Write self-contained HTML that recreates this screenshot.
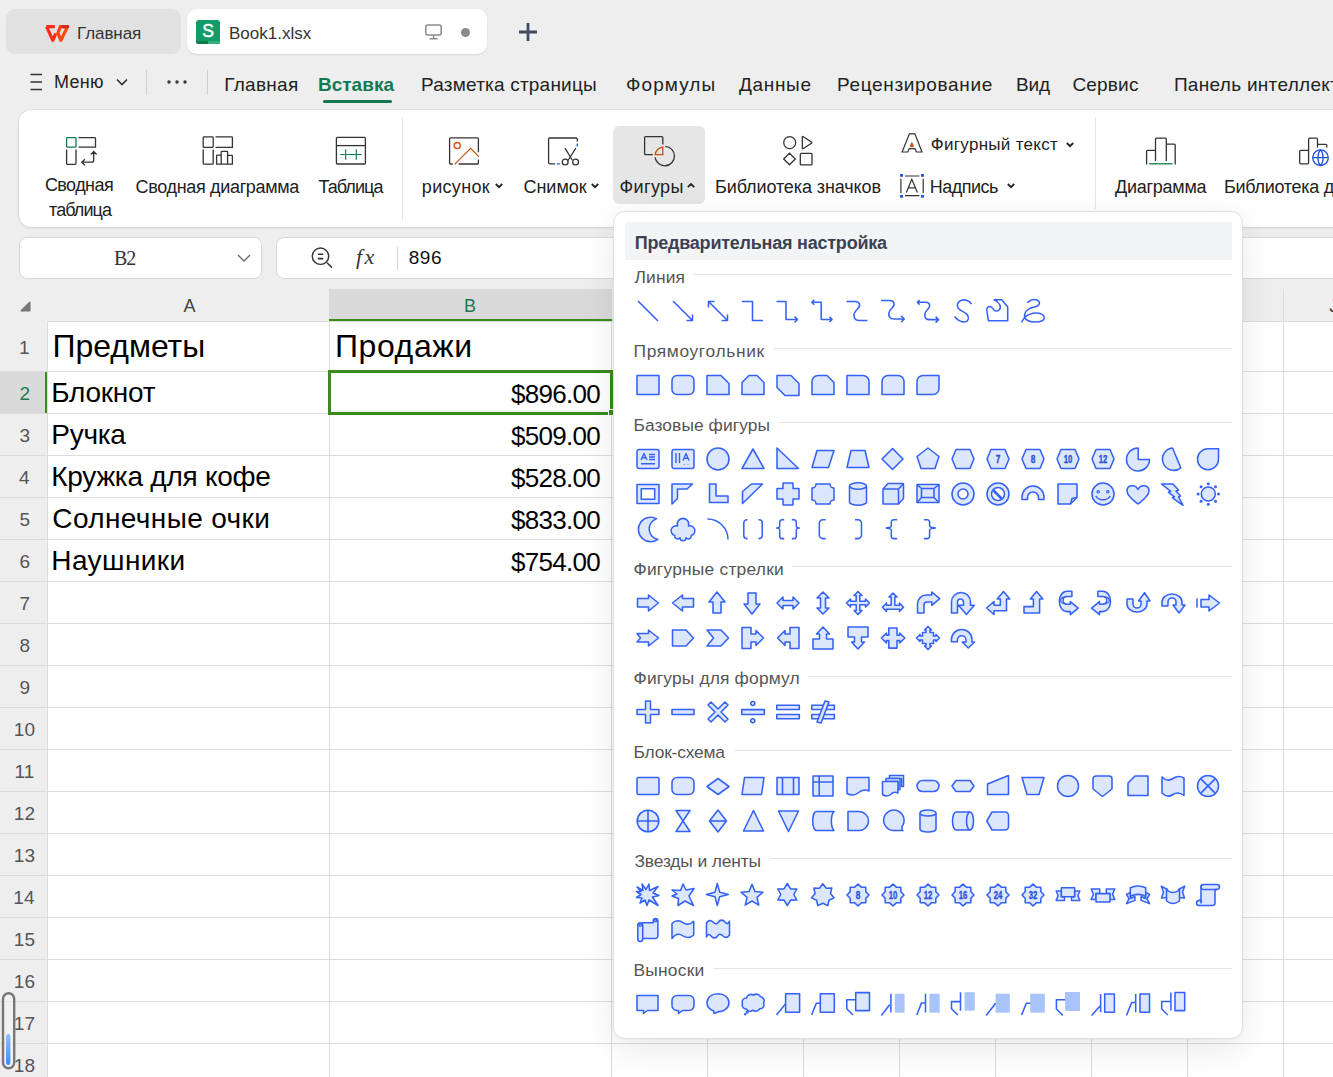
<!DOCTYPE html><html><head><meta charset="utf-8"><style>
html,body{margin:0;padding:0}
body{width:1333px;height:1077px;overflow:hidden;position:relative;background:#eeeeee;font-family:'Liberation Sans', sans-serif}
.t{position:absolute;white-space:nowrap;line-height:normal}
.b{position:absolute;box-sizing:border-box}
.s{position:absolute;overflow:visible}
.k *{fill:none;stroke:#333333;stroke-width:1.3}
.i{position:absolute;overflow:visible}
.i *{fill:#dce6fd;stroke:#3462f8;stroke-width:1.55;stroke-linejoin:round;fill-rule:evenodd}
.i .n{fill:none}
.i .n2{fill:none;stroke-width:1.4}
.i .n3{fill:none;stroke-width:2.6}
.i .n4{fill:none;stroke-width:1.2}
.i .x{fill:#3462f8;stroke:none}
.i .a{fill:#a9c3fb;stroke:none}
.i .tx{fill:#2a52d6;stroke:#2a52d6;stroke-width:0.35;font-family:'Liberation Sans',sans-serif;font-weight:700;}
</style></head><body>
<div class="b" style="left:6px;top:9px;width:175px;height:45px;background:#e1e1e1;border-radius:9px"></div>
<svg class="s" style="left:40px;top:18px" width="36" height="30" viewBox="0 0 36 30"><path d="M6.3 8.6H14.8M6.6 8.6L12.8 22.3L15.8 15.5" fill="none" stroke="#ff2a17" stroke-width="3.2" stroke-linejoin="round"/><path d="M17.4 16.5L20.3 8.6H27.6L20.9 22.3L18.2 15.8" fill="none" stroke="#ff4514" stroke-width="3.2" stroke-linejoin="round"/><path d="M22.5 8.6H27.6" stroke="#c9301a" stroke-width="3.2" stroke-linecap="round"/></svg>
<div class="t" style="left:77.00px;top:24.04px;font-size:17px;color:#333;letter-spacing:-0.083px;">Главная</div>
<div class="b" style="left:187px;top:9px;width:300px;height:45px;background:#fff;border-radius:10px;box-shadow:0 1px 2px rgba(0,0,0,.10)"></div>
<svg class="s" style="left:196px;top:20px" width="24" height="24" viewBox="0 0 24 24"><rect x="0" y="0" width="24" height="24" rx="3" fill="#139c68"/><path d="M0 21H24V21.5A2.5 2.5 0 0 1 21.5 24H2.5A2.5 2.5 0 0 1 0 21.5Z" fill="#0d7c4a"/><path d="M12 21H24V21.5A2.5 2.5 0 0 1 21.5 24H12Z" fill="#33b07c"/><text x="12" y="17" text-anchor="middle" font-family="Liberation Sans" font-weight="400" font-size="17.5" fill="#fff" stroke="#fff" stroke-width="0.5">S</text></svg>
<div class="t" style="left:229.00px;top:24.04px;font-size:17px;color:#333;letter-spacing:0.011px;">Book1.xlsx</div>
<svg class="s" style="left:425px;top:24px" width="17" height="16" viewBox="0 0 17 16"><rect x="0.8" y="1" width="15.4" height="10" rx="2" fill="none" stroke="#8a8a8a" stroke-width="1.5"/><path d="M8.5 11v3M4.5 14.8h8" stroke="#8a8a8a" stroke-width="1.5"/></svg>
<svg class="s" style="left:461px;top:28px" width="9" height="9" viewBox="0 0 9 9"><circle cx="4.5" cy="4.5" r="4.5" fill="#8c8c8c"/></svg>
<svg class="s" style="left:518px;top:22px" width="20" height="20" viewBox="0 0 20 20"><path d="M10 1v18M1 10h18" stroke="#3f4a66" stroke-width="2.8"/></svg>
<svg class="s" style="left:30px;top:73px" width="13" height="18" viewBox="0 0 13 18"><path d="M0.5 1.5h11.5M0.5 9h11.5M0.5 16.5h11.5" stroke="#333" stroke-width="1.6"/></svg>
<div class="t" style="left:54.00px;top:71.92px;font-size:18px;color:#222;letter-spacing:0.284px;">Меню</div>
<svg class="s" style="left:116px;top:78px" width="12" height="8" viewBox="0 0 12 8"><path d="M1 1.5l5 5 5-5" fill="none" stroke="#333" stroke-width="1.6"/></svg>
<div class="b" style="left:146px;top:70px;width:1px;height:25px;background:#d0d0d0"></div>
<svg class="s" style="left:166px;top:79px" width="22" height="6" viewBox="0 0 22 6"><circle cx="3" cy="3" r="1.7" fill="#333"/><circle cx="11" cy="3" r="1.7" fill="#333"/><circle cx="19" cy="3" r="1.7" fill="#333"/></svg>
<div class="b" style="left:207px;top:70px;width:1px;height:25px;background:#d0d0d0"></div>
<div class="t" style="left:224.20px;top:74.00px;font-size:19px;color:#222;letter-spacing:0.295px;">Главная</div>
<div class="t" style="left:318.00px;top:74.00px;font-size:19px;color:#137a50;font-weight:700;letter-spacing:0.008px;">Вставка</div>
<div class="t" style="left:421.00px;top:74.00px;font-size:19px;color:#222;letter-spacing:0.206px;">Разметка страницы</div>
<div class="t" style="left:626.10px;top:74.00px;font-size:19px;color:#222;letter-spacing:1.046px;">Формулы</div>
<div class="t" style="left:739.00px;top:74.00px;font-size:19px;color:#222;letter-spacing:0.665px;">Данные</div>
<div class="t" style="left:837.00px;top:74.00px;font-size:19px;color:#222;letter-spacing:0.658px;">Рецензирование</div>
<div class="t" style="left:1016.00px;top:74.00px;font-size:19px;color:#222;letter-spacing:-0.143px;">Вид</div>
<div class="t" style="left:1072.40px;top:74.00px;font-size:19px;color:#222;letter-spacing:0.188px;">Сервис</div>
<div class="t" style="left:1173.90px;top:74.00px;font-size:19px;color:#222;letter-spacing:0.300px;">Панель интеллектуальных</div>
<div class="b" style="left:323px;top:100px;width:69px;height:3px;background:#137a50;border-radius:2px"></div>
<div class="b" style="left:19px;top:110px;width:1400px;height:117px;background:#fff;border-radius:12px;box-shadow:0 0 0 0.6px rgba(0,0,0,.09), 0 1px 3px rgba(0,0,0,.08)"></div>
<div class="b" style="left:613px;top:126px;width:92px;height:78px;background:#e6e6e6;border-radius:6px"></div>
<svg class="s k" style="left:60px;top:130px" width="40" height="40" viewBox="0 0 40 40"><rect x="6.6" y="7.7" width="9.4" height="9.5" rx="0.8" style="stroke:#107c4d"/><path d="M18.5 7.7H34.7A0.8 0.8 0 0 1 35.5 8.5V17.2H18.5M6.6 19.5V33.5A0.8 0.8 0 0 0 7.4 34.3H15.2A0.8 0.8 0 0 0 16 33.5V19.5M33.7 21.7V30.2A2 2 0 0 1 31.7 32.2H22M30.8 24.5L33.7 21.5L36.6 24.5M24.8 29.3L21.8 32.2L24.8 35.2"/></svg><svg class="s k" style="left:198px;top:130px" width="40" height="40" viewBox="0 0 40 40"><rect x="5.2" y="6.9" width="10" height="10.5" rx="0.8"/><path d="M17.5 6.9H33.6A0.8 0.8 0 0 1 34.4 7.7V17.4H17.5M5.2 19.5V33.4A0.8 0.8 0 0 0 6 34.2H14.4A0.8 0.8 0 0 0 15.2 33.4V19.5M18.6 34.2V26A0.8 0.8 0 0 1 19.4 25.2H23.2V22.2A0.8 0.8 0 0 1 24 21.4H28.8A0.8 0.8 0 0 1 29.6 22.2V25.3H33.6A0.8 0.8 0 0 1 34.4 26.1V34.2ZM23.2 25.2V34.2M29.6 25.3V34.2"/></svg><svg class="s k" style="left:331px;top:130px" width="40" height="40" viewBox="0 0 40 40"><rect x="5.4" y="7.4" width="29" height="26.6" rx="1"/><path d="M5.4 15.6H34.4"/><path d="M9.3 24.5H30.5M14.7 19.3V29.7M25.3 19.3V29.7" style="stroke:#107c4d;stroke-width:1.2"/></svg><svg class="s k" style="left:444px;top:130px" width="40" height="40" viewBox="0 0 40 40"><path d="M8.7 34H6.6A1 1 0 0 1 5.6 33V8.8A1 1 0 0 1 6.6 7.8H33.4A1 1 0 0 1 34.4 8.8V22.3M34.4 29.4V33A1 1 0 0 1 33.4 34H14.7"/><circle cx="13.2" cy="15.6" r="3.1" style="stroke:#c9500c"/><path d="M10.6 34.4L26.6 18.4L34.8 26.6" style="stroke:#c9500c;stroke-width:1.2"/></svg><svg class="s k" style="left:544px;top:130px" width="40" height="40" viewBox="0 0 40 40"><path d="M11.2 33.8H5.6A1 1 0 0 1 4.6 32.8V9A1 1 0 0 1 5.6 8H32.3A1 1 0 0 1 33.3 9V11.5"/><path d="M33.3 13.4V16.4M13 33.8H15.8" style="stroke:#1a4fe0;stroke-width:1.3"/><circle cx="21.2" cy="32" r="2.9"/><circle cx="31.6" cy="32" r="2.9"/><path d="M21 18.2L28.2 30M31.8 18.2L24 30.5"/></svg><svg class="s k" style="left:639px;top:130px" width="40" height="40" viewBox="0 0 40 40"><path d="M13.8 24.7H6.6A1 1 0 0 1 5.6 23.7V7.7A1 1 0 0 1 6.6 6.7H22.8A1 1 0 0 1 23.8 7.7V14.5"/><path d="M26.3 16.4A9.7 9.7 0 1 1 16.1 27.3"/><path d="M16.2 24.7A8.5 8.5 0 0 1 23.8 17.1V24.7Z" style="stroke:#c9500c;stroke-width:1.3"/></svg><svg class="s k" style="left:778px;top:130px" width="40" height="40" viewBox="0 0 40 40"><circle cx="11.7" cy="12.6" r="6"/><path d="M24.3 6.8V18.3A0.5 0.5 0 0 0 25 18.7L33.7 13A0.5 0.5 0 0 0 33.7 12.3L25 6.5A0.5 0.5 0 0 0 24.3 6.8ZM11.5 23.2L17.3 29L11.5 34.8L5.7 29Z"/><rect x="22.3" y="23.4" width="11.7" height="11.5" rx="1"/></svg><svg class="s k" style="left:895px;top:128px" width="34" height="74" viewBox="0 0 34 74"><path d="M14.4 5.9H19.9L27 24H21.4L20 20.6H14.2L12.8 24H7.1Z" style="stroke-width:1.2"/><path d="M16.8 14.6L18.5 18.6H15.1Z" style="fill:#c9500c;stroke:#c9500c;stroke-width:1"/><path d="M10 48H24.4M10 67.7H24.4M5.9 50.8V65M28.2 50.8V65M11.3 64.6L16.8 51.2L22.4 64.6M13.3 59.8H20.3" style="stroke-width:1.2"/><rect x="5.1" y="46" width="2.8" height="2.8" style="fill:#1a4fe0;stroke:none"/><rect x="26.1" y="46" width="2.8" height="2.8" style="fill:#1a4fe0;stroke:none"/><rect x="5.1" y="66.9" width="2.8" height="2.8" style="fill:#1a4fe0;stroke:none"/><rect x="26.1" y="66.9" width="2.8" height="2.8" style="fill:#1a4fe0;stroke:none"/></svg><svg class="s k" style="left:1141px;top:130px" width="40" height="40" viewBox="0 0 40 40"><path d="M5.6 34.6V21.3A1 1 0 0 1 6.6 20.3H14.5V30.9M14.5 20.3V9.2A1 1 0 0 1 15.5 8.2H24.3A1 1 0 0 1 25.3 9.2V30.9M25.3 14.1H33.2A1 1 0 0 1 34.2 15.1V34.6"/><path d="M8.2 33.8H31.6" style="stroke:#107c4d;stroke-width:1.3"/></svg><svg class="s k" style="left:1293px;top:130px" width="40" height="40" viewBox="0 0 40 40"><path d="M15.6 20.3H7.7A1 1 0 0 0 6.7 21.3V32.8A1 1 0 0 0 7.7 33.8H14.6A1 1 0 0 0 15.6 32.8V9.2A1 1 0 0 1 16.6 8.2H23.5A1 1 0 0 1 24.5 9.2V17.5M24.5 14.3H32.8A1 1 0 0 1 33.8 15.3V17.5"/><circle cx="27.5" cy="27.7" r="7.8" style="stroke:#1a4fe0;stroke-width:1.3"/><path d="M19.7 27.7H35.3M27.5 19.9C24 23.5 24 31.9 27.5 35.5M27.5 19.9C31 23.5 31 31.9 27.5 35.5" style="stroke:#1a4fe0;stroke-width:1.2"/></svg>
<div class="t" style="left:44.90px;top:175.12px;font-size:18px;color:#222;letter-spacing:-0.571px;">Сводная</div>
<div class="t" style="left:49.00px;top:200.22px;font-size:18px;color:#222;letter-spacing:-0.903px;">таблица</div>
<div class="t" style="left:135.60px;top:176.52px;font-size:18px;color:#222;letter-spacing:-0.336px;">Сводная диаграмма</div>
<div class="t" style="left:318.40px;top:176.52px;font-size:18px;color:#222;letter-spacing:-0.928px;">Таблица</div>
<div class="b" style="left:402px;top:117px;width:1px;height:103px;background:#e4e4e4"></div>
<div class="t" style="left:421.80px;top:176.52px;font-size:18px;color:#222;letter-spacing:0.331px;">рисунок</div>
<div class="t" style="left:523.50px;top:176.52px;font-size:18px;color:#222;letter-spacing:-0.036px;">Снимок</div>
<div class="t" style="left:619.50px;top:176.52px;font-size:18px;color:#222;letter-spacing:0.377px;">Фигуры</div>
<div class="t" style="left:715.00px;top:176.52px;font-size:18px;color:#222;letter-spacing:-0.103px;">Библиотека значков</div>
<div class="t" style="left:930.80px;top:135.34px;font-size:17px;color:#222;letter-spacing:0.293px;">Фигурный текст</div>
<div class="t" style="left:929.80px;top:176.52px;font-size:18px;color:#222;letter-spacing:-0.519px;">Надпись</div>
<div class="b" style="left:1095px;top:117px;width:1px;height:92px;background:#e4e4e4"></div>
<div class="t" style="left:1115.00px;top:176.52px;font-size:18px;color:#222;letter-spacing:-0.262px;">Диаграмма</div>
<div class="t" style="left:1224.00px;top:176.52px;font-size:18px;color:#222;letter-spacing:-0.280px;">Библиотека диаграмм</div>
<svg class="s" style="left:494.5px;top:182.9px" width="8" height="5.2" viewBox="0 0 8 5.2"><path d="M0.8 1L4 4.2L7.2 1" fill="none" stroke="#222" stroke-width="1.8"/></svg>
<svg class="s" style="left:591px;top:182.9px" width="8" height="5.2" viewBox="0 0 8 5.2"><path d="M0.8 1L4 4.2L7.2 1" fill="none" stroke="#222" stroke-width="1.8"/></svg>
<svg class="s" style="left:687px;top:182.9px" width="8" height="5.2" viewBox="0 0 8 5.2"><path d="M0.8 4.2L4 1L7.2 4.2" fill="none" stroke="#222" stroke-width="1.8"/></svg>
<svg class="s" style="left:1065.5px;top:141.9px" width="8" height="5.2" viewBox="0 0 8 5.2"><path d="M0.8 1L4 4.2L7.2 1" fill="none" stroke="#222" stroke-width="1.8"/></svg>
<svg class="s" style="left:1006.5px;top:183.4px" width="8" height="5.2" viewBox="0 0 8 5.2"><path d="M0.8 1L4 4.2L7.2 1" fill="none" stroke="#222" stroke-width="1.8"/></svg>
<div class="b" style="left:19px;top:237px;width:243px;height:42px;background:#fff;border:1px solid #d9d9d9;border-radius:8px"></div>
<div class="t" style="left:113.88px;top:247.10px;font-size:20px;color:#333;letter-spacing:-0.900px;font-family:'Liberation Serif', serif;">B2</div>
<svg class="s" style="left:237px;top:254px" width="14" height="8" viewBox="0 0 14 8"><path d="M1 1l6 6 6-6" fill="none" stroke="#666" stroke-width="1.3"/></svg>
<div class="b" style="left:276px;top:237px;width:1200px;height:42px;background:#fff;border:1px solid #d9d9d9;border-radius:8px"></div>
<svg class="s" style="left:300px;top:240px" width="90" height="35" viewBox="0 0 90 35"><circle cx="20.5" cy="16.2" r="8.2" fill="none" stroke="#333" stroke-width="1.4"/><path d="M17.8 14.3H23.2M17.8 18.6H23.2" stroke="#333" stroke-width="1.6"/><path d="M27 22.8L32 27.6" stroke="#333" stroke-width="1.5"/></svg>
<div class="t" style="left:356px;top:243.5px;font-size:22px;font-family:'Liberation Serif',serif;font-style:italic;color:#333;letter-spacing:2.5px">fx</div>
<div class="b" style="left:397px;top:247px;width:1px;height:23px;background:#d4d4d4"></div>
<div class="t" style="left:408.70px;top:247.10px;font-size:19px;color:#111;letter-spacing:0.583px;">896</div>
<div class="b" style="left:47px;top:321px;width:1400px;height:800px;background:#fff"></div><div class="b" style="left:329px;top:289px;width:283px;height:32px;background:#dadada"></div><div class="b" style="left:329px;top:319px;width:283px;height:2px;background:#3a8a1e"></div><div class="b" style="left:0px;top:371px;width:47px;height:42px;background:#dadada"></div><div class="b" style="left:45px;top:371px;width:2px;height:42px;background:#3a8a1e"></div><svg class="s" style="left:20px;top:301px" width="11" height="11" viewBox="0 0 11 11"><path d="M1.2 9.8 L9.8 1.2 L9.8 9.8 Z" fill="#777" stroke="#777" stroke-width="1.5" stroke-linejoin="round"/></svg><svg class="s" style="left:0px;top:0px" width="1333" height="1077" viewBox="0 0 1333 1077"><rect x="47" y="321" width="1333" height="1" fill="#dcdcdc"/><rect x="0" y="371" width="1333" height="1" fill="#dcdcdc"/><rect x="0" y="413" width="1333" height="1" fill="#dcdcdc"/><rect x="0" y="455" width="1333" height="1" fill="#dcdcdc"/><rect x="0" y="497" width="1333" height="1" fill="#dcdcdc"/><rect x="0" y="539" width="1333" height="1" fill="#dcdcdc"/><rect x="0" y="581" width="1333" height="1" fill="#dcdcdc"/><rect x="0" y="623" width="1333" height="1" fill="#dcdcdc"/><rect x="0" y="665" width="1333" height="1" fill="#dcdcdc"/><rect x="0" y="707" width="1333" height="1" fill="#dcdcdc"/><rect x="0" y="749" width="1333" height="1" fill="#dcdcdc"/><rect x="0" y="791" width="1333" height="1" fill="#dcdcdc"/><rect x="0" y="833" width="1333" height="1" fill="#dcdcdc"/><rect x="0" y="875" width="1333" height="1" fill="#dcdcdc"/><rect x="0" y="917" width="1333" height="1" fill="#dcdcdc"/><rect x="0" y="959" width="1333" height="1" fill="#dcdcdc"/><rect x="0" y="1001" width="1333" height="1" fill="#dcdcdc"/><rect x="0" y="1043" width="1333" height="1" fill="#dcdcdc"/><rect x="0" y="1085" width="1333" height="1" fill="#dcdcdc"/><rect x="47" y="321" width="1" height="760" fill="#dcdcdc"/><rect x="329" y="321" width="1" height="760" fill="#dcdcdc"/><rect x="611" y="321" width="1" height="760" fill="#dcdcdc"/><rect x="707" y="289" width="1" height="800" fill="#dcdcdc"/><rect x="803" y="289" width="1" height="800" fill="#dcdcdc"/><rect x="899" y="289" width="1" height="800" fill="#dcdcdc"/><rect x="995" y="289" width="1" height="800" fill="#dcdcdc"/><rect x="1091" y="289" width="1" height="800" fill="#dcdcdc"/><rect x="1187" y="289" width="1" height="800" fill="#dcdcdc"/><rect x="1283" y="289" width="1" height="800" fill="#dcdcdc"/></svg><div class="t" style="left:183.50px;top:295.92px;font-size:18px;color:#444;">A</div><div class="t" style="left:464.00px;top:295.92px;font-size:18px;color:#1a7a55;">B</div><div class="t" style="left:652.50px;top:295.92px;font-size:18px;color:#444;">C</div><div class="t" style="left:748.00px;top:295.92px;font-size:18px;color:#444;">D</div><div class="t" style="left:844.50px;top:295.92px;font-size:18px;color:#444;">E</div><div class="t" style="left:941.00px;top:295.92px;font-size:18px;color:#444;">F</div><div class="t" style="left:1036.50px;top:295.92px;font-size:18px;color:#444;">G</div><div class="t" style="left:1132.50px;top:295.92px;font-size:18px;color:#444;">H</div><div class="t" style="left:1232.50px;top:295.92px;font-size:18px;color:#444;">I</div><div class="t" style="left:1329.30px;top:295.92px;font-size:18px;color:#444;">J</div><div class="t" style="left:19.10px;top:337.40px;font-size:19px;color:#555;">1</div><div class="t" style="left:19.60px;top:383.40px;font-size:19px;color:#1a7a55;">2</div><div class="t" style="left:19.60px;top:425.40px;font-size:19px;color:#555;">3</div><div class="t" style="left:19.10px;top:467.40px;font-size:19px;color:#555;">4</div><div class="t" style="left:19.60px;top:509.40px;font-size:19px;color:#555;">5</div><div class="t" style="left:19.60px;top:551.40px;font-size:19px;color:#555;">6</div><div class="t" style="left:19.60px;top:593.40px;font-size:19px;color:#555;">7</div><div class="t" style="left:19.60px;top:635.40px;font-size:19px;color:#555;">8</div><div class="t" style="left:19.60px;top:677.40px;font-size:19px;color:#555;">9</div><div class="t" style="left:13.82px;top:719.40px;font-size:19px;color:#555;">10</div><div class="t" style="left:14.52px;top:761.40px;font-size:19px;color:#555;">11</div><div class="t" style="left:13.82px;top:803.40px;font-size:19px;color:#555;">12</div><div class="t" style="left:13.82px;top:845.40px;font-size:19px;color:#555;">13</div><div class="t" style="left:13.32px;top:887.40px;font-size:19px;color:#555;">14</div><div class="t" style="left:13.82px;top:929.40px;font-size:19px;color:#555;">15</div><div class="t" style="left:13.82px;top:971.40px;font-size:19px;color:#555;">16</div><div class="t" style="left:13.82px;top:1013.40px;font-size:19px;color:#555;">17</div><div class="t" style="left:13.82px;top:1055.40px;font-size:19px;color:#555;">18</div><div class="t" style="left:52.60px;top:328.33px;font-size:32px;color:#000;letter-spacing:-0.050px;">Предметы</div><div class="t" style="left:334.90px;top:328.33px;font-size:32px;color:#000;letter-spacing:0.606px;">Продажи</div><div class="t" style="left:51.30px;top:377.21px;font-size:28px;color:#000;letter-spacing:-0.243px;">Блокнот</div><div class="t" style="left:510.90px;top:379.05px;font-size:26px;color:#000;letter-spacing:-0.704px;">$896.00</div><div class="t" style="left:51.30px;top:419.21px;font-size:28px;color:#000;letter-spacing:-0.282px;">Ручка</div><div class="t" style="left:510.90px;top:421.05px;font-size:26px;color:#000;letter-spacing:-0.704px;">$509.00</div><div class="t" style="left:51.30px;top:461.21px;font-size:28px;color:#000;letter-spacing:-0.259px;">Кружка для кофе</div><div class="t" style="left:510.90px;top:463.05px;font-size:26px;color:#000;letter-spacing:-0.704px;">$528.00</div><div class="t" style="left:52.30px;top:503.21px;font-size:28px;color:#000;letter-spacing:0.381px;">Солнечные очки</div><div class="t" style="left:510.90px;top:505.05px;font-size:26px;color:#000;letter-spacing:-0.704px;">$833.00</div><div class="t" style="left:51.30px;top:545.21px;font-size:28px;color:#000;letter-spacing:0.415px;">Наушники</div><div class="t" style="left:510.90px;top:547.05px;font-size:26px;color:#000;letter-spacing:-0.704px;">$754.00</div><svg class="s" style="left:0px;top:990px" width="17" height="82" viewBox="0 0 17 82"><rect x="3" y="3.3" width="11.2" height="75" rx="5.6" fill="#f4f4f4" fill-opacity=".6" stroke="#777" stroke-width="2.4"/><defs><linearGradient id="bg1" x1="0" y1="0" x2="0" y2="1"><stop offset="0" stop-color="#8fc0ff"/><stop offset="1" stop-color="#3d8bff"/></linearGradient></defs><rect x="6" y="44" width="4.4" height="31" rx="2.2" fill="url(#bg1)"/></svg><div class="b" style="left:328px;top:370px;width:285px;height:45px;border:3px solid #3a8a1e"></div><div class="b" style="left:608px;top:409px;width:6px;height:7px;background:#3a8a1e;border:1px solid #fff"></div>
<div class="b" style="left:613px;top:211px;width:630px;height:828px;background:#fff;border:1px solid #e0e0e0;border-radius:12px;box-shadow:0 10px 36px rgba(0,0,0,.09), 0 1px 3px rgba(0,0,0,.04)"></div><div class="b" style="left:625px;top:222px;width:607px;height:38px;background:#f3f4f6"></div><div class="t" style="left:634.80px;top:233.12px;font-size:18px;color:#3a4254;font-weight:700;letter-spacing:-0.231px;">Предварительная настройка</div><div class="t" style="left:634.50px;top:266.57px;font-size:17.4px;color:#555;letter-spacing:0.139px;">Линия</div><div class="b" style="left:693px;top:274px;width:539px;height:1px;background:#e4e4e4"></div><svg class="i" style="left:636px;top:299px" width="24" height="24" viewBox="0 0 24 24"><path d="M2 2L22 22" class="n"/></svg><svg class="i" style="left:671px;top:299px" width="24" height="24" viewBox="0 0 24 24"><path d="M2 2L21.5 21.5M21.5 15.5V21.5H15.5" class="n"/></svg><svg class="i" style="left:706px;top:299px" width="24" height="24" viewBox="0 0 24 24"><path d="M2.5 2.5L21.5 21.5M2.5 8.5V2.5H8.5M21.5 15.5V21.5H15.5" class="n"/></svg><svg class="i" style="left:741px;top:299px" width="24" height="24" viewBox="0 0 24 24"><path d="M1 2.5H11.5V21.5H22" class="n"/></svg><svg class="i" style="left:776px;top:299px" width="24" height="24" viewBox="0 0 24 24"><path d="M0.5 2.5H10V20.5H21.5M18.5 17.5L21.5 20.5L18.5 23.5" class="n"/></svg><svg class="i" style="left:811px;top:299px" width="24" height="24" viewBox="0 0 24 24"><path d="M1 3.3H10.2V20.4H21M3.3 0.8L0.8 3.3L3.3 5.8M18.5 17.9L21 20.4L18.5 22.9" class="n"/></svg><svg class="i" style="left:846px;top:299px" width="24" height="24" viewBox="0 0 24 24"><path d="M0.5 2.5H9C14 2.5 15 6.5 11.5 10C8 13.5 7 16 8.5 19C9.5 21 11 21.5 13 21.5H21.5" class="n"/></svg><svg class="i" style="left:881px;top:299px" width="24" height="24" viewBox="0 0 24 24"><path d="M0 1.5H8.5C13.5 1.5 14.5 5.5 11 9C7.5 12.5 7 16 9 18.5C10 19.8 11 20 13 20H23M20 16.7L23.3 20L20 23.3" class="n"/></svg><svg class="i" style="left:916px;top:299px" width="24" height="24" viewBox="0 0 24 24"><path d="M1.3 3.3H9.5C14 3.3 15 7 12 10C9 13 8 16 9.5 19C10.3 20.4 11.5 20.6 13 20.6H22.5M3.6 1L1.3 3.3L3.6 5.6M19.6 17.6L22.5 20.6L19.6 23.6" class="n"/></svg><svg class="i" style="left:951px;top:299px" width="24" height="24" viewBox="0 0 24 24"><path d="M20.5 5C18.5 1.5 14 0.3 10.5 1.2C6.5 2.5 5 6 7.5 9.5C9.5 12 14.5 13 16.5 16C18.5 19.5 17 23 13.5 23C9.5 23 6 20.5 3.5 17.5" class="n"/></svg><svg class="i" style="left:986px;top:299px" width="24" height="24" viewBox="0 0 24 24"><path d="M8.1 0.8H15.7L21.7 8.1V21.7H2.4L0.8 11.5C0.8 8.5 2.5 7.5 4 7.5C6 7.5 7 10 8 11C9.5 12.5 12 12.5 13.5 10.5C15.5 8 14 3.5 8.1 0.8Z" class="n"/></svg><svg class="i" style="left:1021px;top:299px" width="24" height="24" viewBox="0 0 24 24"><path d="M0.5 23.3L3.6 18.4C3.3 15 4.5 12 7.5 10.2C10.5 8.5 14.5 8 16.5 7C19 5.5 19.2 2.5 16.5 1.2C13.5 -0.2 9 0.5 6.3 3.7M3.6 18.4C7 15.5 11 14 15 14C20 14 23.3 16 23.3 18.5C23.3 21.5 19 23 14 23C9 23 5 21.5 3.6 18.4" class="n"/></svg><div class="t" style="left:633.50px;top:340.97px;font-size:17.4px;color:#555;letter-spacing:0.642px;">Прямоугольник</div><div class="b" style="left:773px;top:348px;width:459px;height:1px;background:#e4e4e4"></div><svg class="i" style="left:636px;top:373px" width="24" height="24" viewBox="0 0 24 24"><rect x="1" y="2.5" width="22" height="19"/></svg><svg class="i" style="left:671px;top:373px" width="24" height="24" viewBox="0 0 24 24"><rect x="1" y="2.5" width="22" height="19" rx="5"/></svg><svg class="i" style="left:706px;top:373px" width="24" height="24" viewBox="0 0 24 24"><path d="M1 2.5H15L23 10.5V21.5H1Z"/></svg><svg class="i" style="left:741px;top:373px" width="24" height="24" viewBox="0 0 24 24"><path d="M1 9.5L8 2.5H16L23 9.5V21.5H1Z"/></svg><svg class="i" style="left:776px;top:373px" width="24" height="24" viewBox="0 0 24 24"><path d="M1 2.5H15L23 10.5V22.5H9L1 14.5Z"/></svg><svg class="i" style="left:811px;top:373px" width="24" height="24" viewBox="0 0 24 24"><path d="M1 21.5V8.5A6 6 0 0 1 7 2.5H16L23 9.5V21.5Z"/></svg><svg class="i" style="left:846px;top:373px" width="24" height="24" viewBox="0 0 24 24"><path d="M1 2.5H17A6 6 0 0 1 23 8.5V21.5H1Z"/></svg><svg class="i" style="left:881px;top:373px" width="24" height="24" viewBox="0 0 24 24"><path d="M1 21.5V8.5A6 6 0 0 1 7 2.5H17A6 6 0 0 1 23 8.5V21.5Z"/></svg><svg class="i" style="left:916px;top:373px" width="24" height="24" viewBox="0 0 24 24"><path d="M1 21.5V8.5A6 6 0 0 1 7 2.5H23V15.5A6 6 0 0 1 17 21.5Z"/></svg><div class="t" style="left:633.50px;top:414.97px;font-size:17.4px;color:#555;letter-spacing:0.068px;">Базовые фигуры</div><div class="b" style="left:779px;top:422px;width:453px;height:1px;background:#e4e4e4"></div><svg class="i" style="left:636px;top:447px" width="24" height="24" viewBox="0 0 24 24"><rect x="1" y="2.5" width="22" height="19" rx="2"/><path d="M5 13L8 6.5L11 13M6.2 10.8H9.8M13 7.5H19M13 10H19M13 12.5H19M5 16.8H19" class="n2"/></svg><svg class="i" style="left:671px;top:447px" width="24" height="24" viewBox="0 0 24 24"><rect x="1" y="2.5" width="22" height="19" rx="2"/><path d="M5 6V16M8.5 6V16M12 13.5L15 6.5L18 13.5M13.2 11.2H16.8M13.5 17V17.5M17 17V17.5" class="n2"/></svg><svg class="i" style="left:706px;top:447px" width="24" height="24" viewBox="0 0 24 24"><circle cx="12" cy="12" r="11"/></svg><svg class="i" style="left:741px;top:447px" width="24" height="24" viewBox="0 0 24 24"><path d="M12 2L23 21.5H1Z"/></svg><svg class="i" style="left:776px;top:447px" width="24" height="24" viewBox="0 0 24 24"><path d="M1 1V21.5H22.5Z"/></svg><svg class="i" style="left:811px;top:447px" width="24" height="24" viewBox="0 0 24 24"><path d="M6 3.5H23L17.5 20.5H1Z"/></svg><svg class="i" style="left:846px;top:447px" width="24" height="24" viewBox="0 0 24 24"><path d="M5 3.5H19L23 20.5H1Z"/></svg><svg class="i" style="left:881px;top:447px" width="24" height="24" viewBox="0 0 24 24"><path d="M11.5 1.5L22 12L11.5 22.5L1 12Z"/></svg><svg class="i" style="left:916px;top:447px" width="24" height="24" viewBox="0 0 24 24"><path d="M12 1L23 9.5L19 21.5H5L1 9.5Z"/></svg><svg class="i" style="left:951px;top:447px" width="24" height="24" viewBox="0 0 24 24"><path d="M1 12L5 2.5H19L23 12L19 21.5H5Z"/></svg><svg class="i" style="left:986px;top:447px" width="24" height="24" viewBox="0 0 24 24"><path d="M1 12L5 2.5H19L23 12L19 21.5H5Z"/><text x="9.70" y="15.7" class="tx" font-size="10.5" textLength="4.6" lengthAdjust="spacingAndGlyphs">7</text></svg><svg class="i" style="left:1021px;top:447px" width="24" height="24" viewBox="0 0 24 24"><path d="M1 12L5 2.5H19L23 12L19 21.5H5Z"/><text x="9.70" y="15.7" class="tx" font-size="10.5" textLength="4.6" lengthAdjust="spacingAndGlyphs">8</text></svg><svg class="i" style="left:1056px;top:447px" width="24" height="24" viewBox="0 0 24 24"><path d="M1 12L5 2.5H19L23 12L19 21.5H5Z"/><text x="7.70" y="15.7" class="tx" font-size="10.5" textLength="8.6" lengthAdjust="spacingAndGlyphs">10</text></svg><svg class="i" style="left:1091px;top:447px" width="24" height="24" viewBox="0 0 24 24"><path d="M1 12L5 2.5H19L23 12L19 21.5H5Z"/><text x="7.70" y="15.7" class="tx" font-size="10.5" textLength="8.6" lengthAdjust="spacingAndGlyphs">12</text></svg><svg class="i" style="left:1126px;top:447px" width="24" height="24" viewBox="0 0 24 24"><path d="M12.2 12.5V1A11.5 11.5 0 1 0 23.5 12.5Z"/></svg><svg class="i" style="left:1161px;top:447px" width="24" height="24" viewBox="0 0 24 24"><path d="M11.5 1A11.2 11.2 0 1 0 19.8 20.8Z"/></svg><svg class="i" style="left:1196px;top:447px" width="24" height="24" viewBox="0 0 24 24"><path d="M12 1.7H22.5V12A10.5 10.5 0 1 1 12 1.7Z"/></svg><svg class="i" style="left:636px;top:482px" width="24" height="24" viewBox="0 0 24 24"><path d="M1 2.5H23V21.5H1ZM5.3 6.7V17.3H18.7V6.7Z"/></svg><svg class="i" style="left:671px;top:482px" width="24" height="24" viewBox="0 0 24 24"><path d="M1 2H21.5L16 7H6.5V16.5L1 22Z"/></svg><svg class="i" style="left:706px;top:482px" width="24" height="24" viewBox="0 0 24 24"><path d="M3.5 2H10V14H22V20.5H3.5Z"/></svg><svg class="i" style="left:741px;top:482px" width="24" height="24" viewBox="0 0 24 24"><path d="M1.5 9.5L10.5 2H21.5L1.5 21.5Z"/></svg><svg class="i" style="left:776px;top:482px" width="24" height="24" viewBox="0 0 24 24"><path d="M7 1H17V6.5H23V17H17V23H7V17H1V6.5H7Z"/></svg><svg class="i" style="left:811px;top:482px" width="24" height="24" viewBox="0 0 24 24"><path d="M5 2H19A4 4 0 0 0 23 6V18A4 4 0 0 0 19 22H5A4 4 0 0 0 1 18V6A4 4 0 0 0 5 2Z"/></svg><svg class="i" style="left:846px;top:482px" width="24" height="24" viewBox="0 0 24 24"><path d="M3.5 4V20A8.5 3.2 0 0 0 20.5 20V4A8.5 3.2 0 0 0 3.5 4Z"/><path d="M3.5 4A8.5 3.2 0 0 0 20.5 4" class="n"/></svg><svg class="i" style="left:881px;top:482px" width="24" height="24" viewBox="0 0 24 24"><path d="M2 7L7 1.5H22.5V16.5L17.5 22H2Z"/><path d="M2 7H17.5L22.5 1.5M17.5 7V22" class="n"/></svg><svg class="i" style="left:916px;top:482px" width="24" height="24" viewBox="0 0 24 24"><rect x="1" y="2.5" width="22" height="18"/><path d="M5.5 6.5H18V15.5H5.5ZM1 2.5L5.5 6.5M23 2.5L18 6.5M1 20.5L5.5 15.5M23 20.5L18 15.5" class="n"/></svg><svg class="i" style="left:951px;top:482px" width="24" height="24" viewBox="0 0 24 24"><path d="M12 1A11 11 0 1 1 12 23A11 11 0 1 1 12 1ZM12 7A5 5 0 1 0 12 17A5 5 0 1 0 12 7Z"/></svg><svg class="i" style="left:986px;top:482px" width="24" height="24" viewBox="0 0 24 24"><path d="M12 1A11 11 0 1 1 12 23A11 11 0 1 1 12 1ZM12 5.5A6.5 6.5 0 1 0 12 18.5A6.5 6.5 0 1 0 12 5.5Z"/><path d="M7.5 8.5L15.5 16.5" class="n3"/></svg><svg class="i" style="left:1021px;top:482px" width="24" height="24" viewBox="0 0 24 24"><path d="M1 17.5V15A11 11 0 0 1 23 15V17.5H17.5V15.5A5.5 5.5 0 0 0 6.5 15.5V17.5Z"/></svg><svg class="i" style="left:1056px;top:482px" width="24" height="24" viewBox="0 0 24 24"><path d="M2 2H21V15.5L14.5 22H2Z"/><path d="M14.5 22L16 16.5L21 15.5" class="n"/></svg><svg class="i" style="left:1091px;top:482px" width="24" height="24" viewBox="0 0 24 24"><circle cx="12" cy="12" r="11"/><circle cx="7.2" cy="9.8" r="1.2" class="n4"/><circle cx="16.8" cy="9.8" r="1.2" class="n4"/><path d="M4.8 14C7.5 19 16.5 19 19.2 14" class="n"/></svg><svg class="i" style="left:1126px;top:482px" width="24" height="24" viewBox="0 0 24 24"><path d="M12 7.5C9.5 2 1 2.5 1 9C1 14 7 18 12 22C17 18 23 14 23 9C23 2.5 14.5 2 12 7.5Z"/></svg><svg class="i" style="left:1161px;top:482px" width="24" height="24" viewBox="0 0 24 24"><path d="M0.5 2H12L17.5 8L15 9L19.5 14L17.5 15L22 23.3L11.5 15.8L13.5 14.8L7.5 10.3L9.8 9.3Z"/></svg><svg class="i" style="left:1196px;top:482px" width="24" height="24" viewBox="0 0 24 24"><circle cx="12.3" cy="12" r="7"/><circle cx="12.30" cy="1.80" r="1.5" class="x"/><circle cx="19.51" cy="4.79" r="1.5" class="x"/><circle cx="22.50" cy="12.00" r="1.5" class="x"/><circle cx="19.51" cy="19.21" r="1.5" class="x"/><circle cx="12.30" cy="22.20" r="1.5" class="x"/><circle cx="5.09" cy="19.21" r="1.5" class="x"/><circle cx="2.10" cy="12.00" r="1.5" class="x"/><circle cx="5.09" cy="4.79" r="1.5" class="x"/></svg><svg class="i" style="left:636px;top:517px" width="24" height="24" viewBox="0 0 24 24"><path d="M20.5 1.8A12.2 12.2 0 1 0 21.8 22.3A10.6 10.6 0 0 1 20.5 1.8Z"/></svg><svg class="i" style="left:671px;top:517px" width="24" height="24" viewBox="0 0 24 24"><path d="M6.5 9A5.8 5.8 0 1 1 17.5 9A5 5 0 0 1 20.3 18.6A3 3 0 0 1 15 20.8A3 3 0 0 1 9 20.8A3 3 0 0 1 3.7 18.6A5 5 0 0 1 6.5 9Z"/></svg><svg class="i" style="left:706px;top:517px" width="24" height="24" viewBox="0 0 24 24"><path d="M1.5 2A20.5 20.5 0 0 1 22 22.5" class="n"/></svg><svg class="i" style="left:741px;top:517px" width="24" height="24" viewBox="0 0 24 24"><path d="M6.5 2.8H5.8A3 3 0 0 0 2.8 5.8V18.6A3 3 0 0 0 5.8 21.6H6.5M17.5 2.8H18.2A3 3 0 0 1 21.2 5.8V18.6A3 3 0 0 1 18.2 21.6H17.5" class="n"/></svg><svg class="i" style="left:776px;top:517px" width="24" height="24" viewBox="0 0 24 24"><path d="M8.2 2.8H6.0A2.3 2.3 0 0 0 3.7 5.1V9.2C3.7 10.4 1.5 11 0.5 11C1.5 11 3.7 11.6 3.7 12.8V19.3A2.3 2.3 0 0 0 6.0 21.6H8.2M15.8 2.8H18.0A2.3 2.3 0 0 1 20.3 5.1V9.2C20.3 10.4 22.5 11 23.5 11C22.5 11 20.3 11.6 20.3 12.8V19.3A2.3 2.3 0 0 1 18.0 21.6H15.8" class="n"/></svg><svg class="i" style="left:811px;top:517px" width="24" height="24" viewBox="0 0 24 24"><path d="M14.7 2.8H11.8A3.5 3.5 0 0 0 8.3 6.3V18.1A3.5 3.5 0 0 0 11.8 21.6H14.7" class="n"/></svg><svg class="i" style="left:846px;top:517px" width="24" height="24" viewBox="0 0 24 24"><path d="M9 2.8H12A3.5 3.5 0 0 1 15.5 6.3V18.1A3.5 3.5 0 0 1 12 21.6H9" class="n"/></svg><svg class="i" style="left:881px;top:517px" width="24" height="24" viewBox="0 0 24 24"><path d="M16.1 2.8H12.600000000000001A2.3 2.3 0 0 0 10.3 5.1V9.2C10.3 10.4 6.2 11 5.2 11C6.2 11 10.3 11.6 10.3 12.8V19.3A2.3 2.3 0 0 0 12.600000000000001 21.6H16.1" class="n"/></svg><svg class="i" style="left:916px;top:517px" width="24" height="24" viewBox="0 0 24 24"><path d="M7.9 2.8H11.3A2.3 2.3 0 0 1 13.6 5.1V9.2C13.6 10.4 18.4 11 19.4 11C18.4 11 13.6 11.6 13.6 12.8V19.3A2.3 2.3 0 0 1 11.3 21.6H7.9" class="n"/></svg><div class="t" style="left:633.50px;top:558.97px;font-size:17.4px;color:#555;letter-spacing:0.217px;">Фигурные стрелки</div><div class="b" style="left:792px;top:566px;width:440px;height:1px;background:#e4e4e4"></div><svg class="i" style="left:636px;top:591px" width="24" height="24" viewBox="0 0 24 24"><path d="M1.5 7.5H12.5V4L22.5 12L12.5 20V16H1.5Z"/></svg><svg class="i" style="left:671px;top:591px" width="24" height="24" viewBox="0 0 24 24"><path d="M22.5 7.5H11.5V4L1.5 12L11.5 20V16H22.5Z"/></svg><svg class="i" style="left:706px;top:591px" width="24" height="24" viewBox="0 0 24 24"><path d="M11 1L19 11H15V22H7V11H3Z"/></svg><svg class="i" style="left:741px;top:591px" width="24" height="24" viewBox="0 0 24 24"><path d="M11 23L19 13H15V2H7V13H3Z"/></svg><svg class="i" style="left:776px;top:591px" width="24" height="24" viewBox="0 0 24 24"><path d="M1 12L7 6V9.5H17V6L23 12L17 18V14.5H7V18Z"/></svg><svg class="i" style="left:811px;top:591px" width="24" height="24" viewBox="0 0 24 24"><path d="M12 1L18 7H14.5V17H18L12 23L6 17H9.5V7H6Z"/></svg><svg class="i" style="left:846px;top:591px" width="24" height="24" viewBox="0 0 24 24"><path d="M12 0.5L16 4.5H13.8V10.2H19.5V8L23.5 12L19.5 16V13.8H13.8V19.5H16L12 23.5L8 19.5H10.2V13.8H4.5V16L0.5 12L4.5 8V10.2H10.2V4.5H8Z"/></svg><svg class="i" style="left:881px;top:591px" width="24" height="24" viewBox="0 0 24 24"><path d="M12 2L16 6H13.8V14.2H18.5V12L22.5 16.2L18.5 20.4V18.2H5.5V20.4L1.5 16.2L5.5 12V14.2H10.2V6H8Z"/></svg><svg class="i" style="left:916px;top:591px" width="24" height="24" viewBox="0 0 24 24"><path d="M1.5 22V13A9 9 0 0 1 10.5 4H15.8V1L23.7 7.7L15.8 14.3V11H11A3 3 0 0 0 8 14V22Z"/></svg><svg class="i" style="left:951px;top:591px" width="24" height="24" viewBox="0 0 24 24"><path d="M0.5 22V11A9.5 9.5 0 0 1 19.5 11V14.3H23.3L15.4 23.5L7.5 14.3H12.5V11A3 3 0 0 0 6.5 11V22Z"/></svg><svg class="i" style="left:986px;top:591px" width="24" height="24" viewBox="0 0 24 24"><path d="M0.5 17L8 10.5V14.3H14.3V8H11.2L17.5 0.5L23.8 8H20.5V19.8H8V23.5Z"/></svg><svg class="i" style="left:1021px;top:591px" width="24" height="24" viewBox="0 0 24 24"><path d="M3 15.6H12.4V8H9.3L15.6 0.5L21.9 8H18.6V21.9H3Z"/></svg><svg class="i" style="left:1056px;top:591px" width="24" height="24" viewBox="0 0 24 24"><path d="M15.9 0.3H11A7.7 10.15 0 0 0 11 20.6H14.3V23.7L22.2 17.2L14.3 10.6V13.2H11A3.9 3.85 0 0 1 11 5.5H15.9Z"/><path d="M11 5.5A6.5 3.85 0 0 0 11 13.2" class="n4"/></svg><svg class="i" style="left:1091px;top:591px" width="24" height="24" viewBox="0 0 24 24"><path d="M6.9 0.3H11.8A7.7 10.15 0 0 1 11.8 20.6H8.5V23.7L0.6 17.2L8.5 10.6V13.2H11.8A3.9 3.85 0 0 0 11.8 5.5H6.9Z"/><path d="M11.8 5.5A6.5 3.85 0 0 1 11.8 13.2" class="n4"/></svg><svg class="i" style="left:1126px;top:591px" width="24" height="24" viewBox="0 0 24 24"><path d="M1 8H7V13A4 4 0 0 0 15 13V10H12.5L18.5 1.7L24 10H21V13A10 8 0 0 1 1 13Z"/></svg><svg class="i" style="left:1161px;top:591px" width="24" height="24" viewBox="0 0 24 24"><path d="M1 15V11A10 8 0 0 1 21 11V14H24L18 22L12 14H15V11A4 4 0 0 0 7 11V15Z"/></svg><svg class="i" style="left:1196px;top:591px" width="24" height="24" viewBox="0 0 24 24"><path d="M5 8.5H13V4L23.5 12L13 20V15.9H5Z"/><path d="M1 7.5V16.5" class="n"/></svg><svg class="i" style="left:636px;top:626px" width="24" height="24" viewBox="0 0 24 24"><path d="M1 7.5H12.5V4L22.5 12L12.5 20V16H1L4.5 12Z"/></svg><svg class="i" style="left:671px;top:626px" width="24" height="24" viewBox="0 0 24 24"><path d="M1.5 4H15L22.5 12L15 20H1.5Z"/></svg><svg class="i" style="left:706px;top:626px" width="24" height="24" viewBox="0 0 24 24"><path d="M1 4H15L22.5 12L15 20H1L7.5 12Z"/></svg><svg class="i" style="left:741px;top:626px" width="24" height="24" viewBox="0 0 24 24"><path d="M1 1.5H10V8H15V4.5L22.5 12L15 19.5V16H10V22.5H1Z"/></svg><svg class="i" style="left:776px;top:626px" width="24" height="24" viewBox="0 0 24 24"><path d="M23 1.5H14V8H9V4.5L1.5 12L9 19.5V16H14V22.5H23Z"/></svg><svg class="i" style="left:811px;top:626px" width="24" height="24" viewBox="0 0 24 24"><path d="M2 13H8.5V8H5.5L12 1L18.5 8H15.5V13H22V23H2Z"/></svg><svg class="i" style="left:846px;top:626px" width="24" height="24" viewBox="0 0 24 24"><path d="M2 1H22V11H15.5V16H18.5L12 23L5.5 16H8.5V11H2Z"/></svg><svg class="i" style="left:881px;top:626px" width="24" height="24" viewBox="0 0 24 24"><path d="M7.8 2H16V9.3H18.6V7.1L23.9 12L18.6 16.9V14.6H16V22.1H7.8V14.6H5.5V16.9L0.3 12L5.5 7.1V9.3H7.8Z"/></svg><svg class="i" style="left:916px;top:626px" width="24" height="24" viewBox="0 0 24 24"><path d="M12 0.5L15.5 4H14V6.5H17.5V10H20V8.5L23.5 12L20 15.5V14H17.5V17.5H14V20H15.5L12 23.5L8.5 20H10V17.5H6.5V14H4V15.5L0.5 12L4 8.5V10H6.5V6.5H10V4H8.5Z"/></svg><svg class="i" style="left:951px;top:626px" width="24" height="24" viewBox="0 0 24 24"><path d="M0.4 15.7V13.7A10.3 10.3 0 0 1 21 13.7V16H23.5L17.3 22L11.2 16H15V14A4.3 4.3 0 0 0 6.4 14V15.7Z"/></svg><div class="t" style="left:633.50px;top:667.97px;font-size:17.4px;color:#555;letter-spacing:0.160px;">Фигуры для формул</div><div class="b" style="left:808px;top:676px;width:424px;height:1px;background:#e4e4e4"></div><svg class="i" style="left:636px;top:700px" width="24" height="24" viewBox="0 0 24 24"><path d="M9.5 1H14.5V9.5H23V14.5H14.5V23H9.5V14.5H1V9.5H9.5Z"/></svg><svg class="i" style="left:671px;top:700px" width="24" height="24" viewBox="0 0 24 24"><rect x="1" y="9.5" width="22" height="5"/></svg><svg class="i" style="left:706px;top:700px" width="24" height="24" viewBox="0 0 24 24"><path d="M5 2L12 9L19 2L22 5L15 12L22 19L19 22L12 15L5 22L2 19L9 12L2 5Z"/></svg><svg class="i" style="left:741px;top:700px" width="24" height="24" viewBox="0 0 24 24"><rect x="0.8" y="9.6" width="22.5" height="4.8"/><circle cx="11.8" cy="3.5" r="2"/><circle cx="11.8" cy="20.8" r="2"/></svg><svg class="i" style="left:776px;top:700px" width="24" height="24" viewBox="0 0 24 24"><rect x="0.8" y="5.2" width="22.5" height="4.2"/><rect x="0.8" y="14.5" width="22.5" height="4.2"/></svg><svg class="i" style="left:811px;top:700px" width="24" height="24" viewBox="0 0 24 24"><rect x="0.8" y="5.2" width="22.5" height="4.2"/><rect x="0.8" y="14.5" width="22.5" height="4.2"/><path d="M14 1L18 2L10 23L6 22Z"/></svg><div class="t" style="left:633.50px;top:741.97px;font-size:17.4px;color:#555;letter-spacing:-0.184px;">Блок-схема</div><div class="b" style="left:735px;top:750px;width:497px;height:1px;background:#e4e4e4"></div><svg class="i" style="left:636px;top:774px" width="24" height="24" viewBox="0 0 24 24"><rect x="1" y="3.5" width="22" height="17" rx="1.5"/></svg><svg class="i" style="left:671px;top:774px" width="24" height="24" viewBox="0 0 24 24"><rect x="1" y="3.5" width="22" height="17" rx="5"/></svg><svg class="i" style="left:706px;top:774px" width="24" height="24" viewBox="0 0 24 24"><path d="M1 12.5L12 4.5L23 12.5L12 20.5Z"/></svg><svg class="i" style="left:741px;top:774px" width="24" height="24" viewBox="0 0 24 24"><path d="M3.5 3.5H23L20.5 20.5H1Z"/></svg><svg class="i" style="left:776px;top:774px" width="24" height="24" viewBox="0 0 24 24"><rect x="1" y="3.5" width="22" height="17"/><path d="M6.5 3.5V20.5M17.5 3.5V20.5" class="n"/></svg><svg class="i" style="left:811px;top:774px" width="24" height="24" viewBox="0 0 24 24"><rect x="2" y="2" width="20" height="20"/><path d="M8.2 2V22M2 8H22" class="n"/></svg><svg class="i" style="left:846px;top:774px" width="24" height="24" viewBox="0 0 24 24"><path d="M1 3.5H23V17C18.5 15 15.5 16 12 19C8 22 4.5 21.5 1 19.5Z"/></svg><svg class="i" style="left:881px;top:774px" width="24" height="24" viewBox="0 0 24 24"><path d="M8.5 1.5H22.5V12.5L20.5 12.5V4.5H8.5Z"/><path d="M5 4.5H19V15.5L17 15.5V7.5H5Z"/><path d="M1.5 7.5H17V19C14 17.5 11.5 18.5 9.5 20.5C7 22.5 4 22.3 1.5 20.5Z"/></svg><svg class="i" style="left:916px;top:774px" width="24" height="24" viewBox="0 0 24 24"><rect x="1" y="6.5" width="22" height="11" rx="5.5"/></svg><svg class="i" style="left:951px;top:774px" width="24" height="24" viewBox="0 0 24 24"><path d="M1 12L5 6.5H19L23 12L19 17.5H5Z"/></svg><svg class="i" style="left:986px;top:774px" width="24" height="24" viewBox="0 0 24 24"><path d="M1.5 10L22.5 1.5V20.5H1.5Z"/></svg><svg class="i" style="left:1021px;top:774px" width="24" height="24" viewBox="0 0 24 24"><path d="M1 3.5H23L18 20.5H6Z"/></svg><svg class="i" style="left:1056px;top:774px" width="24" height="24" viewBox="0 0 24 24"><circle cx="12" cy="12" r="10.5"/></svg><svg class="i" style="left:1091px;top:774px" width="24" height="24" viewBox="0 0 24 24"><path d="M2 5A3 3 0 0 1 5 2H18A3 3 0 0 1 21 5V15L11.5 22.5L2 15Z"/></svg><svg class="i" style="left:1126px;top:774px" width="24" height="24" viewBox="0 0 24 24"><path d="M2 9L9 2H22V21.5H2Z"/></svg><svg class="i" style="left:1161px;top:774px" width="24" height="24" viewBox="0 0 24 24"><path d="M1 3C5 7 9 6.5 12 4.5C15.5 2 19.5 2 23 4V21.5C19 18.5 15 18.5 12 20.5C8.5 23 4.5 22.5 1 19Z"/></svg><svg class="i" style="left:1196px;top:774px" width="24" height="24" viewBox="0 0 24 24"><circle cx="12" cy="12" r="10.5"/><path d="M4.6 4.6L19.4 19.4M19.4 4.6L4.6 19.4" class="n"/></svg><svg class="i" style="left:636px;top:809px" width="24" height="24" viewBox="0 0 24 24"><circle cx="12" cy="12" r="10.8"/><path d="M12 1.2V22.8M1.2 12H22.8" class="n"/></svg><svg class="i" style="left:671px;top:809px" width="24" height="24" viewBox="0 0 24 24"><path d="M5 1.5H19L5 22.5H19Z"/></svg><svg class="i" style="left:706px;top:809px" width="24" height="24" viewBox="0 0 24 24"><path d="M12 1L20.5 12L12 23L3.5 12Z"/><path d="M3.5 12H20.5" class="n"/></svg><svg class="i" style="left:741px;top:809px" width="24" height="24" viewBox="0 0 24 24"><path d="M12.5 1.5L22.5 22H2.5Z"/></svg><svg class="i" style="left:776px;top:809px" width="24" height="24" viewBox="0 0 24 24"><path d="M2.5 2H22.5L12.5 22.5Z"/></svg><svg class="i" style="left:811px;top:809px" width="24" height="24" viewBox="0 0 24 24"><path d="M5.5 2.5H23C19.5 6 19.5 18 23 21.5H5.5C0.5 21.5 0.5 2.5 5.5 2.5Z"/></svg><svg class="i" style="left:846px;top:809px" width="24" height="24" viewBox="0 0 24 24"><path d="M2 2.5H13A9.5 9.5 0 0 1 13 21.5H2Z"/></svg><svg class="i" style="left:881px;top:809px" width="24" height="24" viewBox="0 0 24 24"><path d="M22.5 21.5H12A10.2 10.2 0 1 1 21 17.5V21.5"/></svg><svg class="i" style="left:916px;top:809px" width="24" height="24" viewBox="0 0 24 24"><path d="M4 4V20A8 3 0 0 0 20 20V4A8 3 0 0 0 4 4Z"/><path d="M4 4A8 3 0 0 0 20 4" class="n"/></svg><svg class="i" style="left:951px;top:809px" width="24" height="24" viewBox="0 0 24 24"><path d="M5 3H19A3.5 9 0 0 1 19 21H5A3.5 9 0 0 1 5 3Z"/><path d="M19 3A3.5 9 0 0 0 19 21" class="n"/></svg><svg class="i" style="left:986px;top:809px" width="24" height="24" viewBox="0 0 24 24"><path d="M0.8 12L6 3H19A3.5 3.5 0 0 1 22.5 6.5V17.5A3.5 3.5 0 0 1 19 21H6Z"/></svg><div class="t" style="left:634.50px;top:850.97px;font-size:17.4px;color:#555;letter-spacing:-0.142px;">Звезды и ленты</div><div class="b" style="left:770px;top:858px;width:462px;height:1px;background:#e4e4e4"></div><svg class="i" style="left:636px;top:883px" width="24" height="24" viewBox="0 0 24 24"><polygon points="1,4 7,7.5 6,1 10,6.5 13,1 13.5,7.5 22,3.5 17,10 23,12.5 16.5,14 22,22.5 13,17 11,22.5 9,17 4,20 6,15 0.5,14.5 5,11.5 0.5,8.5 5,8.5"/></svg><svg class="i" style="left:671px;top:883px" width="24" height="24" viewBox="0 0 24 24"><polygon points="1,7 9.5,7.5 12,1 15,7 23,5.5 18,13 22.5,22.5 14,18 7,22.5 7.5,15.5 1,13 6,11"/></svg><svg class="i" style="left:706px;top:883px" width="24" height="24" viewBox="0 0 24 24"><polygon points="11.30,0.50 13.63,9.17 22.30,11.50 13.63,13.83 11.30,22.50 8.97,13.83 0.30,11.50 8.97,9.17"/></svg><svg class="i" style="left:741px;top:883px" width="24" height="24" viewBox="0 0 24 24"><polygon points="11.00,1.30 14.06,8.59 21.94,9.25 15.95,14.41 17.76,22.10 11.00,18.00 4.24,22.10 6.05,14.41 0.06,9.25 7.94,8.59"/></svg><svg class="i" style="left:776px;top:883px" width="24" height="24" viewBox="0 0 24 24"><polygon points="11.30,0.50 14.55,5.87 20.83,6.00 17.80,11.50 20.83,17.00 14.55,17.13 11.30,22.50 8.05,17.13 1.77,17.00 4.80,11.50 1.77,6.00 8.05,5.87"/></svg><svg class="i" style="left:811px;top:883px" width="24" height="24" viewBox="0 0 24 24"><polygon points="11.80,0.80 15.23,5.18 20.79,5.13 19.50,10.54 23.01,14.86 17.98,17.23 16.79,22.66 11.80,20.20 6.81,22.66 5.62,17.23 0.59,14.86 4.10,10.54 2.81,5.13 8.37,5.18"/></svg><svg class="i" style="left:846px;top:883px" width="24" height="24" viewBox="0 0 24 24"><polygon points="12.00,1.00 15.25,4.15 19.78,4.22 19.85,8.75 23.00,12.00 19.85,15.25 19.78,19.78 15.25,19.85 12.00,23.00 8.75,19.85 4.22,19.78 4.15,15.25 1.00,12.00 4.15,8.75 4.22,4.22 8.75,4.15"/><text x="9.70" y="15.7" class="tx" font-size="10.5" textLength="4.6" lengthAdjust="spacingAndGlyphs">8</text></svg><svg class="i" style="left:881px;top:883px" width="24" height="24" viewBox="0 0 24 24"><polygon points="12.00,1.00 15.25,4.15 19.78,4.22 19.85,8.75 23.00,12.00 19.85,15.25 19.78,19.78 15.25,19.85 12.00,23.00 8.75,19.85 4.22,19.78 4.15,15.25 1.00,12.00 4.15,8.75 4.22,4.22 8.75,4.15"/><text x="7.70" y="15.7" class="tx" font-size="10.5" textLength="8.6" lengthAdjust="spacingAndGlyphs">10</text></svg><svg class="i" style="left:916px;top:883px" width="24" height="24" viewBox="0 0 24 24"><polygon points="12.00,1.00 15.25,4.15 19.78,4.22 19.85,8.75 23.00,12.00 19.85,15.25 19.78,19.78 15.25,19.85 12.00,23.00 8.75,19.85 4.22,19.78 4.15,15.25 1.00,12.00 4.15,8.75 4.22,4.22 8.75,4.15"/><text x="7.70" y="15.7" class="tx" font-size="10.5" textLength="8.6" lengthAdjust="spacingAndGlyphs">12</text></svg><svg class="i" style="left:951px;top:883px" width="24" height="24" viewBox="0 0 24 24"><polygon points="12.00,1.00 15.25,4.15 19.78,4.22 19.85,8.75 23.00,12.00 19.85,15.25 19.78,19.78 15.25,19.85 12.00,23.00 8.75,19.85 4.22,19.78 4.15,15.25 1.00,12.00 4.15,8.75 4.22,4.22 8.75,4.15"/><text x="7.70" y="15.7" class="tx" font-size="10.5" textLength="8.6" lengthAdjust="spacingAndGlyphs">16</text></svg><svg class="i" style="left:986px;top:883px" width="24" height="24" viewBox="0 0 24 24"><polygon points="12.00,1.00 15.25,4.15 19.78,4.22 19.85,8.75 23.00,12.00 19.85,15.25 19.78,19.78 15.25,19.85 12.00,23.00 8.75,19.85 4.22,19.78 4.15,15.25 1.00,12.00 4.15,8.75 4.22,4.22 8.75,4.15"/><text x="7.70" y="15.7" class="tx" font-size="10.5" textLength="8.6" lengthAdjust="spacingAndGlyphs">24</text></svg><svg class="i" style="left:1021px;top:883px" width="24" height="24" viewBox="0 0 24 24"><polygon points="12.00,1.00 15.25,4.15 19.78,4.22 19.85,8.75 23.00,12.00 19.85,15.25 19.78,19.78 15.25,19.85 12.00,23.00 8.75,19.85 4.22,19.78 4.15,15.25 1.00,12.00 4.15,8.75 4.22,4.22 8.75,4.15"/><text x="7.70" y="15.7" class="tx" font-size="10.5" textLength="8.6" lengthAdjust="spacingAndGlyphs">32</text></svg><svg class="i" style="left:1056px;top:883px" width="24" height="24" viewBox="0 0 24 24"><path d="M0.2 8H5.4V13.8H8.5V17.4H0.2L2.2 12.7Z"/><path d="M23.8 8H18.6V13.8H15.5V17.4H23.8L21.8 12.7Z"/><rect x="5.4" y="4.8" width="13.2" height="9"/></svg><svg class="i" style="left:1091px;top:883px" width="24" height="24" viewBox="0 0 24 24"><path d="M0.2 5.9H8.7V10.6H5V16.4H0.2L2.5 11.2Z"/><path d="M23.8 5.9H15.3V10.6H19V16.4H23.8L21.5 11.2Z"/><rect x="5" y="10.6" width="14" height="8.4"/></svg><svg class="i" style="left:1126px;top:883px" width="24" height="24" viewBox="0 0 24 24"><path d="M0.5 11.2L4.5 9.5V15.5L8.9 13.5V17.4L0.5 20.6L3 15.9Z"/><path d="M23.5 11.2L19.5 9.5V15.5L15.1 13.5V17.4L23.5 20.6L21 15.9Z"/><path d="M4.3 4.8C9 2.5 15 2.5 19.7 4.8V13.2C15 11 9 11 4.3 13.2Z"/></svg><svg class="i" style="left:1161px;top:883px" width="24" height="24" viewBox="0 0 24 24"><path d="M0.3 3.3L6.5 6.5V14.5L0.5 15L2.5 9Z"/><path d="M23.7 3.3L17.5 6.5V14.5L23.5 15L21.5 9Z"/><path d="M5.5 7C9.5 10 14.5 10 18.5 7V18C14.5 21 9.5 21 5.5 18Z"/></svg><svg class="i" style="left:1196px;top:883px" width="24" height="24" viewBox="0 0 24 24"><path d="M5 20.5V4A2.5 2.5 0 0 1 7.5 1.5H21A2.5 2.5 0 0 1 21 6.5H19V20A2.5 2.5 0 0 1 16.5 22.5H3A2.5 2.5 0 0 1 3 17.5H5"/><path d="M3 17.5A1.2 1.2 0 0 1 5 19.5M21 6.5H7.5A2.5 2.5 0 0 1 7.5 1.5" class="n"/></svg><svg class="i" style="left:636px;top:918px" width="24" height="24" viewBox="0 0 24 24"><path d="M6 4.8H17.3V2.8A2.3 2.3 0 0 1 21.9 2.8V18A2.5 2.5 0 0 1 19.4 20.5H6Z"/><rect x="1.8" y="4.8" width="4.9" height="18.6" rx="2.45"/><circle cx="4.25" cy="7.3" r="1.2" class="n4"/><circle cx="19.6" cy="2.8" r="1.1" class="n4"/></svg><svg class="i" style="left:671px;top:918px" width="24" height="24" viewBox="0 0 24 24"><path d="M1 5.5C5 1.5 9 2.5 12.5 4.8C16 7 19.5 6.5 22.7 3.2V17C19 20.5 15.5 20 12 17.8C8.5 15.5 4.5 15.5 1 20.5Z"/></svg><svg class="i" style="left:706px;top:918px" width="24" height="24" viewBox="0 0 24 24"><path d="M0.5 5C2.5 2 5 2 7 4S11 6.5 12.5 4S17 1.5 19 4S22 6 23.5 3.2V17C21.5 20 19 20 17 18S13 15.5 11.5 18S7 20.5 5 18S2 16 0.5 19Z"/></svg><div class="t" style="left:633.50px;top:959.97px;font-size:17.4px;color:#555;letter-spacing:0.220px;">Выноски</div><div class="b" style="left:713px;top:968px;width:519px;height:1px;background:#e4e4e4"></div><svg class="i" style="left:636px;top:992px" width="24" height="24" viewBox="0 0 24 24"><path d="M1 3.5H22V18.5H11.5L7.5 21.5V18.5H1Z"/></svg><svg class="i" style="left:671px;top:992px" width="24" height="24" viewBox="0 0 24 24"><path d="M6 3.5H18A5 5 0 0 1 23 8.5V13.5A5 5 0 0 1 18 18.5H11.5L7.5 21.5V18.5H6A5 5 0 0 1 1 13.5V8.5A5 5 0 0 1 6 3.5Z"/></svg><svg class="i" style="left:706px;top:992px" width="24" height="24" viewBox="0 0 24 24"><path d="M12 1.7C18.5 1.7 23 5.5 23 10.8C23 16 18 19.5 12.5 19.8L8 21.5L7.8 19C4 17.8 1 14.7 1 10.8C1 5.5 5.5 1.7 12 1.7Z"/></svg><svg class="i" style="left:741px;top:992px" width="24" height="24" viewBox="0 0 24 24"><path d="M5.5 6A4.5 4.5 0 0 1 12.5 3.2A4.5 4.5 0 0 1 19.5 4.8A4 4 0 0 1 22.5 11A4 4 0 0 1 18.5 16.8A4.2 4.2 0 0 1 12 18.2A4.2 4.2 0 0 1 5.5 17A4 4 0 0 1 1.5 11.5A4 4 0 0 1 5.5 6Z"/><circle cx="6.2" cy="20.2" r="1" class="n4"/><circle cx="4.2" cy="22.3" r="0.6" class="n4"/></svg><svg class="i" style="left:776px;top:992px" width="24" height="24" viewBox="0 0 24 24"><rect x="9.6" y="1.8" width="14" height="18.5"/><path d="M9.4 12L0.5 23" class="n"/></svg><svg class="i" style="left:811px;top:992px" width="24" height="24" viewBox="0 0 24 24"><rect x="9.3" y="1.8" width="14" height="18.5"/><path d="M9.3 11.2H5.3L0.6 23" class="n"/></svg><svg class="i" style="left:846px;top:992px" width="24" height="24" viewBox="0 0 24 24"><rect x="9.7" y="0.6" width="13.8" height="18"/><path d="M9.7 7.7H0.8V16.7L7 23" class="n"/></svg><svg class="i" style="left:881px;top:992px" width="24" height="24" viewBox="0 0 24 24"><rect x="13.8" y="1.7" width="9.8" height="19" class="a"/><path d="M9.9 1.7V20.6M8.6 12.8L0.4 23.5" class="n"/></svg><svg class="i" style="left:916px;top:992px" width="24" height="24" viewBox="0 0 24 24"><rect x="13.4" y="1.7" width="10.3" height="19" class="a"/><path d="M9.5 1.7V20.6M9.5 10.9H5.5L0.8 23" class="n"/></svg><svg class="i" style="left:951px;top:992px" width="24" height="24" viewBox="0 0 24 24"><rect x="13.5" y="0.2" width="10.3" height="18.5" class="a"/><path d="M9.5 0.2V18.7M9.5 9.6H0.5V16.7L6.8 23" class="n"/></svg><svg class="i" style="left:986px;top:992px" width="24" height="24" viewBox="0 0 24 24"><rect x="9.6" y="1.7" width="14.2" height="19" class="a"/><path d="M9.6 11.2L0.2 23.5" class="n"/></svg><svg class="i" style="left:1021px;top:992px" width="24" height="24" viewBox="0 0 24 24"><rect x="9.2" y="1.7" width="14.6" height="19" class="a"/><path d="M9.2 11.2H5.3L0.6 23" class="n"/></svg><svg class="i" style="left:1056px;top:992px" width="24" height="24" viewBox="0 0 24 24"><rect x="9.1" y="0" width="14.9" height="19" class="a"/><path d="M9.1 7.8H0.4V17L6.8 23.4" class="n"/></svg><svg class="i" style="left:1091px;top:992px" width="24" height="24" viewBox="0 0 24 24"><rect x="13.7" y="2" width="9.7" height="18.2"/><path d="M9.6 2V20.2M9 13.9L0.6 23.4" class="n"/></svg><svg class="i" style="left:1126px;top:992px" width="24" height="24" viewBox="0 0 24 24"><rect x="14" y="2" width="9.5" height="18.2"/><path d="M9.7 2V20.2M9.7 10.5H5.7L0.5 23.4" class="n"/></svg><svg class="i" style="left:1161px;top:992px" width="24" height="24" viewBox="0 0 24 24"><rect x="14" y="0.4" width="9.7" height="18.2"/><path d="M9.9 0.4V18.6M9.9 9.4H0.7V17L6.8 23" class="n"/></svg>
</body></html>
